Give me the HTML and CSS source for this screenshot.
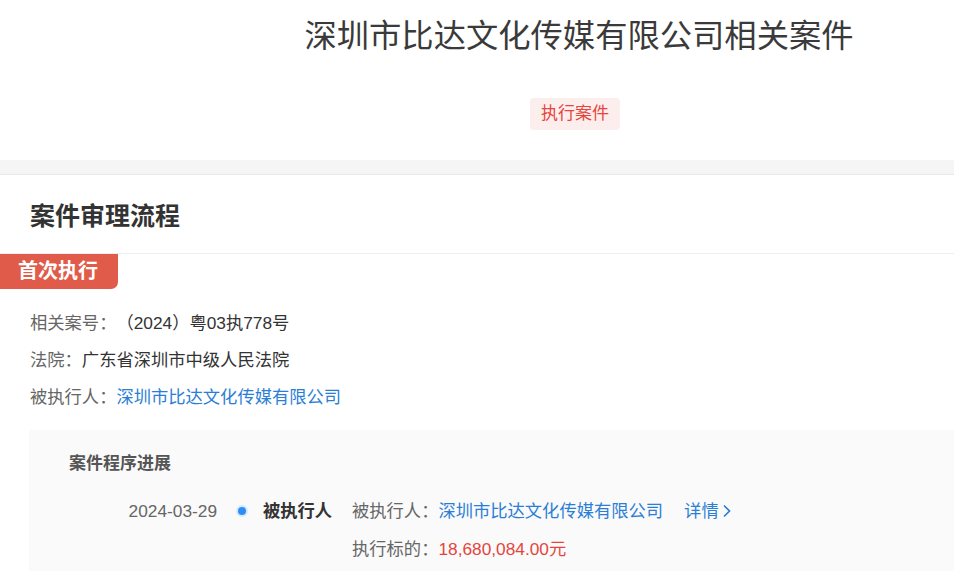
FILE: index.html
```html
<!DOCTYPE html>
<html lang="zh-CN">
<head>
    <meta charset="UTF-8">
    <meta name="viewport" content="width=device-width, initial-scale=1.0">
    <title>深圳市比达文化传媒有限公司相关案件</title>
    <link rel="stylesheet" href="styles.css">
</head>
<body>

<div class="page-head">
    <h1>深圳市比达文化传媒有限公司相关案件</h1>
    <span class="case-tag">执行案件</span>
</div>

<div class="card">
    <div class="card-title">案件审理流程</div>

    <div class="stage-label">首次执行</div>

    <div class="info">
        <p><span class="label">相关案号：</span>（2024）粤03执778号</p>
        <p><span class="label">法院：</span>广东省深圳市中级人民法院</p>
        <p><span class="label">被执行人：</span><a href="#">深圳市比达文化传媒有限公司</a></p>
    </div>

    <div class="progress">
        <div class="progress-title">案件程序进展</div>

        <div class="tl-row">
            <div class="tl-date">2024-03-29</div>
            <div class="tl-dot"></div>
            <div class="tl-type">被执行人</div>
            <div class="tl-detail">
                <p><span class="label">被执行人：</span><a href="#">深圳市比达文化传媒有限公司</a><a href="#" class="more">详情<svg width="12" height="16" viewBox="0 0 12 16"><path d="M3 2.5 L8.5 8 L3 13.5" fill="none" stroke="currentColor" stroke-width="1.7"/></svg></a></p>
                <p><span class="label">执行标的：</span><span class="money">18,680,084.00元</span></p>
            </div>
        </div>
    </div>
</div>

</body>
</html>
```

FILE: styles.css
```css
body {
    margin: 0;
    font-family: "Liberation Sans", "Noto Sans CJK SC", sans-serif;
    background-color: #ffffff;
    color: #333;
    text-spacing-trim: space-all;
}
a {
    color: #2a7ed6;
    text-decoration: none;
}
p {
    margin: 0;
}
.page-head {
    padding: 16px 0 30px 204px;
    text-align: center;
    background-color: #fff;
    border-bottom: 15px solid #f5f5f5;
}
.page-head h1 {
    margin: 0;
    font-size: 32.3px;
    font-weight: normal;
    line-height: 40px;
    color: #3a3a3a;
}
.case-tag {
    display: inline-block;
    margin: 42px 8px 0 0;
    padding: 3px 11px 4px;
    font-size: 17px;
    line-height: 25px;
    color: #e5453d;
    background-color: #fdeeee;
    border-radius: 4px;
}
.card {
    border-top: 1px solid #e8e8e8;
    margin-top: -1px;
}
.card-title {
    height: 78px;
    padding-left: 30px;
    display: flex;
    align-items: center;
    font-size: 25px;
    font-weight: bold;
    color: #333;
    border-bottom: 1px solid #eeeeee;
}
.stage-label {
    display: inline-block;
    padding: 0 20px 0 18px;
    height: 35px;
    line-height: 35px;
    font-size: 20px;
    font-weight: bold;
    color: #fff;
    background-color: #e05b49;
    border-bottom-right-radius: 7px;
}
.info {
    padding: 22px 0 0 30px;
    display: flex;
    flex-direction: column;
    gap: 13px;
    font-size: 17.3px;
    line-height: 24px;
}
.label {
    color: #666;
}
.progress {
    margin: 21px 0 0 29px;
    padding: 23px 0 20px 40px;
    background-color: #fafafa;
}
.progress-title {
    font-size: 17px;
    font-weight: bold;
    line-height: 22px;
    color: #555;
}
.tl-row {
    display: flex;
    align-items: flex-start;
    margin-top: 24px;
    font-size: 17.3px;
    line-height: 24px;
}
.tl-date {
    width: 148px;
    text-align: right;
    color: #666;
}
.tl-dot {
    width: 8px;
    height: 8px;
    margin: 8px 17px 0 21px;
    border-radius: 50%;
    background-color: #2f8ef4;
    box-shadow: 0 0 0 2px #d8eaff;
}
.tl-type {
    width: 89px;
    font-weight: bold;
    color: #333;
}
.tl-detail {
    display: flex;
    flex-direction: column;
    gap: 14px;
}
.more {
    margin-left: 21px;
}
.more svg {
    margin-left: 2px;
    vertical-align: -2px;
}
.money {
    color: #e5453d;
}
```
